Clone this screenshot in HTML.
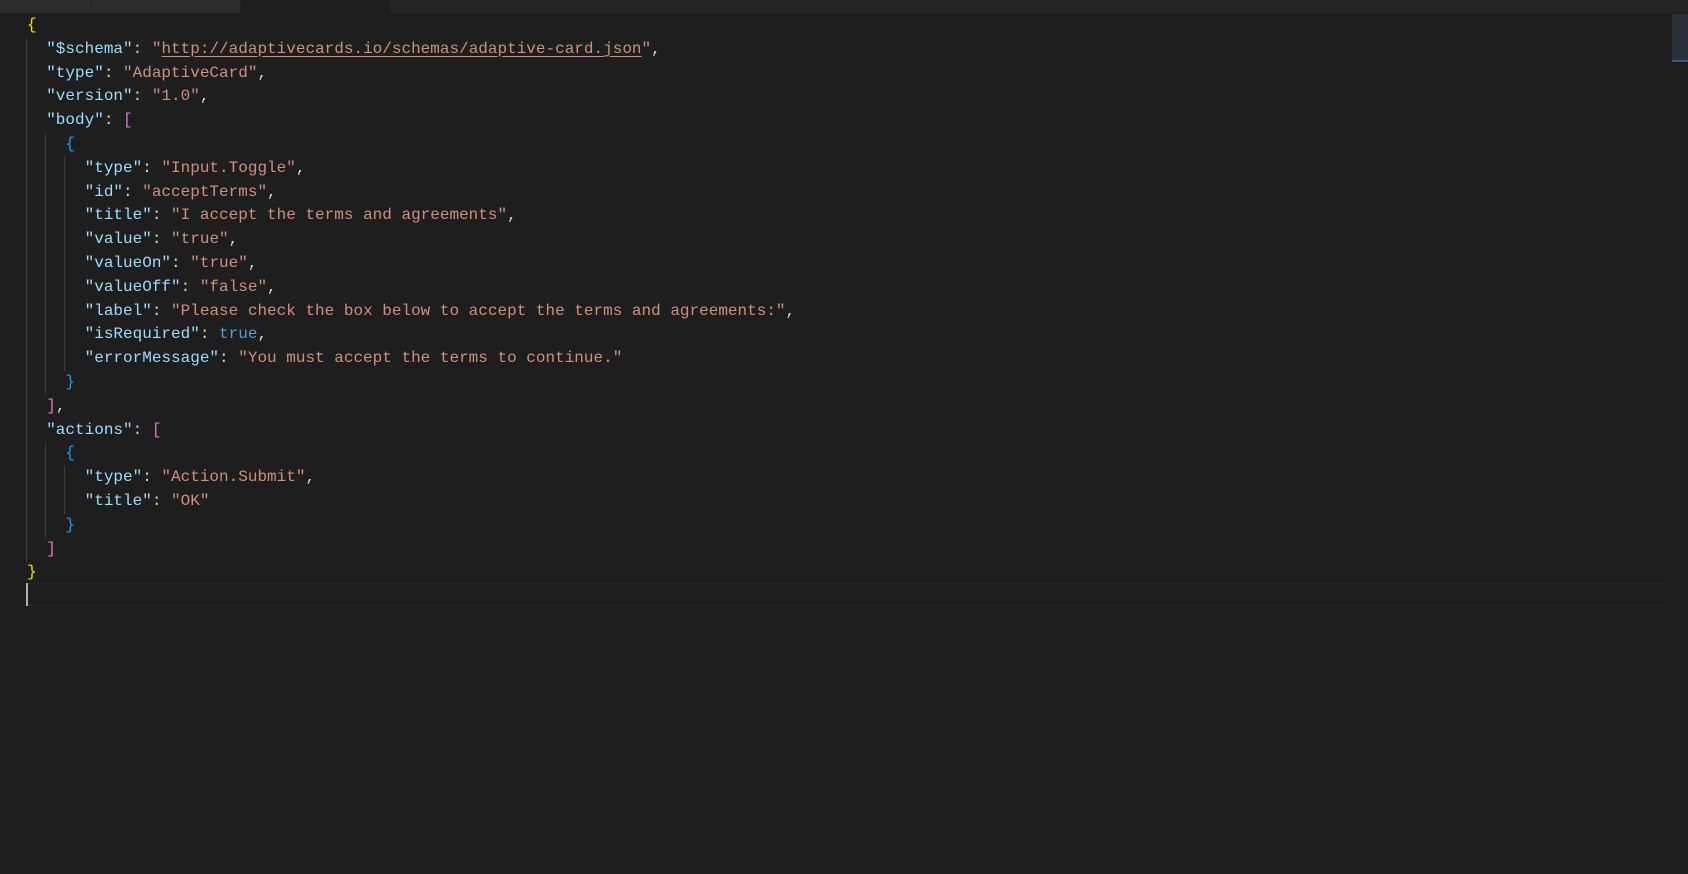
<!DOCTYPE html>
<html><head><meta charset="utf-8"><style>
html,body{margin:0;padding:0;background:#1e1e1e;width:1688px;height:874px;overflow:hidden}
.tabs{position:absolute;left:0;top:0;width:1688px;height:13px;background:#252526}
.tab{position:absolute;top:0;height:13px}
.code{position:absolute;left:27px;top:14px;font-family:"Liberation Mono",monospace;font-size:16px;line-height:23.8px;color:#d4d4d4;white-space:pre}
.k{color:#9cdcfe}.s{color:#ce9178}.y{color:#ffd700}.m{color:#da70d6}.b{color:#179fff}.t{color:#569cd6}
.u{text-decoration:underline;text-underline-offset:3px}
.g{position:absolute;width:1px;background:#404040}
.cur{position:absolute;left:27px;top:583px;width:1637px;height:21px;border-top:1px solid #282828;border-bottom:1px solid #282828}
.caret{position:absolute;left:26px;top:583px;width:2px;height:23px;background:#aeafad}
</style></head><body>
<div class="tabs">
<div class="tab" style="left:0;width:90px;background:#2d2d2d"></div>
<div class="tab" style="left:91px;width:149px;background:#2d2d2d"></div>
<div class="tab" style="left:241px;width:149px;background:#1e1e1e"></div>
</div>
<div class="g" style="left:26px;top:38px;height:524px"></div>
<div class="g" style="left:45px;top:133px;height:262px"></div>
<div class="g" style="left:64px;top:157px;height:214px"></div>
<div class="g" style="left:45px;top:443px;height:96px"></div>
<div class="g" style="left:64px;top:466px;height:48px"></div>
<div class="cur"></div><div class="caret"></div>
<div style="position:absolute;left:1672px;top:14px;width:16px;height:48px;background:#2a3440;opacity:.8"></div>
<div style="position:absolute;left:1672px;top:60px;width:16px;height:2px;background:#3a5a80"></div>
<div class="code"><span class="y">{</span>
  <span class="k">"$schema"</span>: <span class="s">"<span class="u">http://adaptivecards.io/schemas/adaptive-card.json</span>"</span>,
  <span class="k">"type"</span>: <span class="s">"AdaptiveCard"</span>,
  <span class="k">"version"</span>: <span class="s">"1.0"</span>,
  <span class="k">"body"</span>: <span class="m">[</span>
    <span class="b">{</span>
      <span class="k">"type"</span>: <span class="s">"Input.Toggle"</span>,
      <span class="k">"id"</span>: <span class="s">"acceptTerms"</span>,
      <span class="k">"title"</span>: <span class="s">"I accept the terms and agreements"</span>,
      <span class="k">"value"</span>: <span class="s">"true"</span>,
      <span class="k">"valueOn"</span>: <span class="s">"true"</span>,
      <span class="k">"valueOff"</span>: <span class="s">"false"</span>,
      <span class="k">"label"</span>: <span class="s">"Please check the box below to accept the terms and agreements:"</span>,
      <span class="k">"isRequired"</span>: <span class="t">true</span>,
      <span class="k">"errorMessage"</span>: <span class="s">"You must accept the terms to continue."</span>
    <span class="b">}</span>
  <span class="m">]</span>,
  <span class="k">"actions"</span>: <span class="m">[</span>
    <span class="b">{</span>
      <span class="k">"type"</span>: <span class="s">"Action.Submit"</span>,
      <span class="k">"title"</span>: <span class="s">"OK"</span>
    <span class="b">}</span>
  <span class="m">]</span>
<span class="y">}</span>
</div>
</body></html>
